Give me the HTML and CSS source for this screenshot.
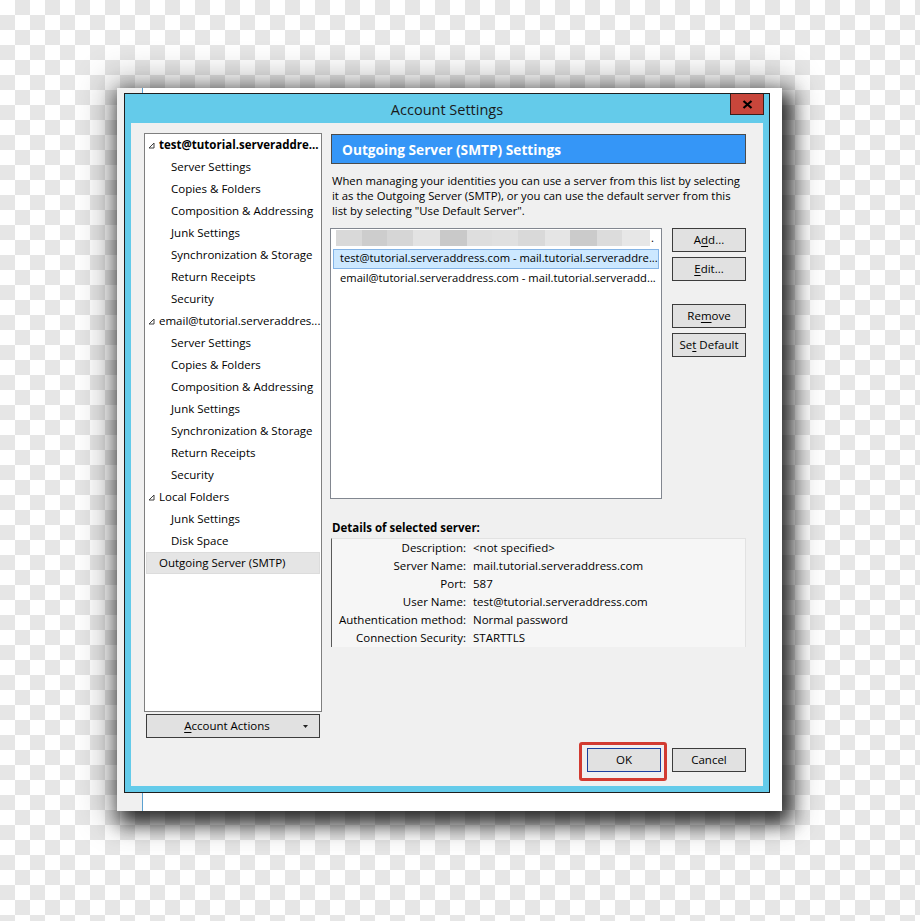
FILE: index.html
```html
<!DOCTYPE html>
<html lang="en">
<head>
<meta charset="utf-8">
<title>Account Settings</title>
<link rel="stylesheet" href="styles.css">
</head>
<body>
<div class="backdrop">
  <div class="dialog">
    <div class="titlebar">
      <span class="title">Account Settings</span>
      <button class="close" aria-label="Close">
        <svg width="11" height="9" viewBox="0 0 11 9"><path d="M1.5 1 L9.5 8 M9.5 1 L1.5 8" stroke="#000" stroke-width="2.2" fill="none"/></svg>
      </button>
    </div>
    <div class="client">
      <div class="panes">
        <div class="sidebar">
          <ul class="tree">
            <li class="acct bold"><svg class="twisty" width="7" height="7" viewBox="0 0 7 7"><path d="M6 1 L6 6 L1 6 Z" fill="none" stroke="#404040" stroke-width="1"/></svg>test@tutorial.serveraddre...</li>
            <li class="sub">Server Settings</li>
            <li class="sub">Copies &amp; Folders</li>
            <li class="sub">Composition &amp; Addressing</li>
            <li class="sub">Junk Settings</li>
            <li class="sub">Synchronization &amp; Storage</li>
            <li class="sub">Return Receipts</li>
            <li class="sub">Security</li>
            <li class="acct"><svg class="twisty" width="7" height="7" viewBox="0 0 7 7"><path d="M6 1 L6 6 L1 6 Z" fill="none" stroke="#404040" stroke-width="1"/></svg>email@tutorial.serveraddres...</li>
            <li class="sub">Server Settings</li>
            <li class="sub">Copies &amp; Folders</li>
            <li class="sub">Composition &amp; Addressing</li>
            <li class="sub">Junk Settings</li>
            <li class="sub">Synchronization &amp; Storage</li>
            <li class="sub">Return Receipts</li>
            <li class="sub">Security</li>
            <li class="acct"><svg class="twisty" width="7" height="7" viewBox="0 0 7 7"><path d="M6 1 L6 6 L1 6 Z" fill="none" stroke="#404040" stroke-width="1"/></svg>Local Folders</li>
            <li class="sub">Junk Settings</li>
            <li class="sub">Disk Space</li>
            <li class="top current">Outgoing Server (SMTP)</li>
          </ul>
          <button class="btn actions"><span class="label"><u>A</u>ccount Actions</span><svg width="5" height="3" viewBox="0 0 5 3"><path d="M0 0 H5 L2.5 3 Z" fill="#222"/></svg></button>
        </div>
        <div class="main">
          <div class="heading">Outgoing Server (SMTP) Settings</div>
          <p class="intro">When managing your identities you can use a server from this list by selecting it as the Outgoing Server (SMTP), or you can use the default server from this list by selecting "Use Default Server".</p>
          <div class="servers">
            <div class="listbox">
              <div class="row hidden-row"><span class="smudge"></span><span class="dot">.</span></div>
              <div class="row selected">test@tutorial.serveraddress.com - mail.tutorial.serveraddre...</div>
              <div class="row">email@tutorial.serveraddress.com - mail.tutorial.serveradd...</div>
            </div>
            <div class="side-buttons">
              <button class="btn">A<u>d</u>d...</button>
              <button class="btn"><u>E</u>dit...</button>
              <button class="btn spaced">Re<u>m</u>ove</button>
              <button class="btn">Se<u>t</u> Default</button>
            </div>
          </div>
          <div class="details-label">Details of selected server:</div>
          <dl class="details">
            <dt>Description:</dt><dd>&lt;not specified&gt;</dd>
            <dt>Server Name:</dt><dd>mail.tutorial.serveraddress.com</dd>
            <dt>Port:</dt><dd>587</dd>
            <dt>User Name:</dt><dd>test@tutorial.serveraddress.com</dd>
            <dt>Authentication method:</dt><dd>Normal password</dd>
            <dt>Connection Security:</dt><dd>STARTTLS</dd>
          </dl>
        </div>
      </div>
      <div class="footer">
        <button class="btn ok">OK<span class="mark"></span></button>
        <button class="btn">Cancel</button>
      </div>
    </div>
  </div>
</div>
</body>
</html>
```
FILE: styles.css
```css
* { box-sizing: border-box; }

html, body { margin: 0; }

body {
  width: 920px;
  height: 921px;
  overflow: hidden;
  padding: 88px 0 0 117px;
  background: repeating-conic-gradient(#e6e6e6 0 25%, #ffffff 0 50%) 0 0 / 30px 30px;
  font-family: "Open Sans", "Noto Sans", sans-serif;
  font-size: 11.5px;
  color: #000;
}

/* paper sheet behind the dialog */
.backdrop {
  width: 665px;
  height: 723px;
  padding: 5px 0 0 7px;
  background: linear-gradient(to right, #f0f0f0 0 25px, #5aa0d0 25px 26px, #ffffff 26px);
  box-shadow: 0 0 34px 8px rgba(0, 0, 0, 0.3), 6px 9px 18px 4px rgba(0, 0, 0, 0.75);
}

.dialog {
  width: 646px;
  height: 700px;
  border: 1px solid #1e1e1e;
  background: #64cbea;
  padding: 0 6px 6px;
  display: flex;
  flex-direction: column;
}

.titlebar {
  height: 29px;
  position: relative;
  display: flex;
  align-items: center;
  justify-content: center;
  padding-top: 2px;
  font-size: 14.5px;
  color: #1a1a1a;
}

.close {
  position: absolute;
  top: 0;
  right: -1px;
  width: 34px;
  height: 21px;
  padding: 0;
  background: #c8463b;
  border: 1px solid #3f1e1a;
  border-top: none;
  display: flex;
  align-items: center;
  justify-content: center;
}

.client {
  flex: 1;
  background: #f0f0f0;
  padding: 10px 17px 14px 13px;
  display: flex;
  flex-direction: column;
}

.panes {
  display: grid;
  grid-template-columns: 178px 415px;
  column-gap: 9px;
}

/* left navigation tree */
.tree {
  height: 579px;
  margin: 0;
  padding: 0;
  list-style: none;
  border: 1px solid #7f7f7f;
  background: #fff;
}

.tree li {
  height: 22px;
  line-height: 22px;
  white-space: nowrap;
  display: flex;
  align-items: center;
}

.tree .acct { padding-left: 3px; }
.tree .sub { padding-left: 26px; }
.tree .top { padding-left: 14px; }
.tree .bold { font-weight: bold; }

.twisty {
  flex: none;
  margin-right: 4px;
  margin-top: 1px;
}

.tree .current {
  margin: 0 1px;
  padding-left: 13px;
  background: #e5e5e5;
  box-shadow: inset 0 0 0 1px #dcdcdc;
}

.btn {
  font: inherit;
  color: #000;
  width: 74px;
  height: 24px;
  padding: 0 0 2px;
  background: #e1e1e1;
  border: 1px solid #3c3c3c;
}

.btn u { text-decoration-thickness: 1px; text-underline-offset: 2px; }

.actions {
  width: 174px;
  margin: 2px 0 0 2px;
  display: flex;
  align-items: center;
  padding: 0 11px 2px 4px;
}

.actions .label {
  flex: 1;
  text-align: center;
}

.actions svg { margin-top: 2px; }

/* right pane */
.heading {
  margin-top: 1px;
  height: 30px;
  padding: 1px 0 0 10px;
  display: flex;
  align-items: center;
  background: #3596f7;
  border: 1px solid #4b4b4b;
  color: #fff;
  font-weight: bold;
  font-size: 13.7px;
}

.intro {
  margin: 9px 0 0 1px;
  line-height: 15px;
  font-size: 11.3px;
}

.servers {
  display: flex;
  gap: 10px;
  margin-top: 10px;
}

.listbox {
  width: 332px;
  height: 271px;
  margin-left: -1px;
  padding: 1px 2px 1px 2px;
  border: 1px solid #828790;
  background: #fff;
  font-size: 11.2px;
}

.row {
  height: 20px;
  line-height: 17px;
  padding-left: 7px;
  white-space: nowrap;
}

.hidden-row {
  height: 19px;
  padding-left: 3px;
  display: flex;
  align-items: flex-start;
}

.smudge {
  width: 314px;
  height: 16px;
  background: linear-gradient(to right,
    #d9d9d9 0 26px, #cdcdcd 26px 51px, #d6d6d6 51px 77px, #e3e3e3 77px 104px,
    #c9c9c9 104px 131px, #dedede 131px 156px, #e0e0e0 156px 182px, #d9d9d9 182px 209px,
    #e5e5e5 209px 234px, #cbcbcb 234px 261px, #dcdcdc 261px 286px, #e7e7e7 286px 314px);
}

.dot {
  line-height: 16px;
  margin-left: 1px;
}

.row.selected {
  padding-left: 6px;
  background: #cce8ff;
  border: 1px solid #84b4e6;
  line-height: 16px;
}

.side-buttons {
  display: flex;
  flex-direction: column;
}

.side-buttons .btn + .btn { margin-top: 5px; }
.side-buttons .btn.spaced { margin-top: 23px; }

.details-label {
  margin-top: 21px;
  padding-left: 1px;
  line-height: 15px;
  font-weight: bold;
}

.details {
  margin: 3px 0 0;
  display: grid;
  grid-template-columns: 134px 1fr;
  column-gap: 7px;
  background: #f6f6f6;
  border-left: 1px solid #5a5a5a;
  border-top: 1px solid #e2e2e2;
  border-right: 1px solid #e2e2e2;
}

.details dt,
.details dd {
  margin: 0;
  line-height: 18px;
  white-space: nowrap;
}

.details dt { text-align: right; }

.footer {
  margin-top: auto;
  display: flex;
  justify-content: flex-end;
  gap: 11px;
}

.ok {
  position: relative;
  border-color: #1b3f9e;
}

/* red highlight drawn around the OK button */
.ok .mark {
  position: absolute;
  top: -7px;
  left: -9px;
  right: -7px;
  bottom: -10px;
  border: 3px solid #d23b31;
  border-radius: 3px;
}
```
